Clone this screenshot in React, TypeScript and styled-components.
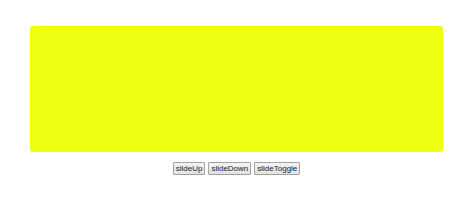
import React from "react";
import styled, { createGlobalStyle } from "styled-components";

const Global = createGlobalStyle`
  html, body { margin: 0; padding: 0; background: #ffffff; }
  body { font-family: "Liberation Sans", Arial, sans-serif; }
`;

const Page = styled.div`
  width: 474px;
  height: 219px;
  padding-top: 26px;
  box-sizing: border-box;
  display: flex;
  flex-direction: column;
  align-items: flex-start;
`;

const Panel = styled.div`
  margin-left: 30px;
  width: 413px;
  height: 126px;
  background: #eeff11;
  border-radius: 3px;
`;

const Controls = styled.div`
  margin-top: 10px;
  margin-left: 30px;
  width: 413px;
  display: flex;
  justify-content: center;
  gap: 3px;
`;

const Button = styled.button`
  height: 13px;
  padding: 0 2px;
  margin: 0;
  border: 1px solid #a2a2a2;
  border-radius: 1px;
  background: linear-gradient(#f4f4f4, #e2e2e2);
  font-family: "Liberation Sans", Arial, sans-serif;
  font-size: 8px;
  line-height: 11px;
  color: #222;
  box-sizing: border-box;
  cursor: pointer;
`;

export default function App() {
  return (
    <>
      <Global />
      <Page>
        <Panel />
        <Controls>
          <Button>slideUp</Button>
          <Button>slideDown</Button>
          <Button>slideToggle</Button>
        </Controls>
      </Page>
    </>
  );
}
